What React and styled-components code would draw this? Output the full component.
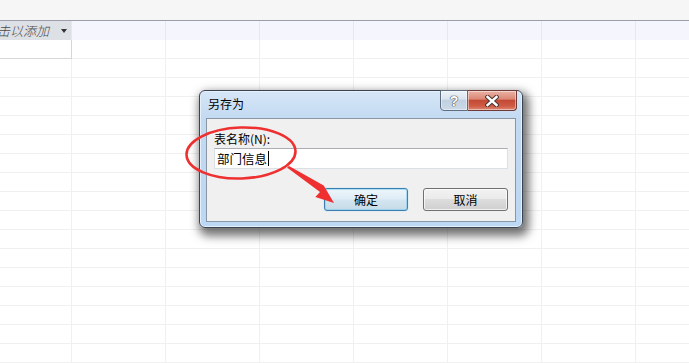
import React from 'react';
import styled, { createGlobalStyle } from 'styled-components';

const Global = createGlobalStyle`
  html, body { margin: 0; padding: 0; background: #fff; }
  body {
    width: 689px; height: 363px; overflow: hidden;
    font-family: "Noto Sans CJK SC", "Liberation Sans", sans-serif;
  }
  * { box-sizing: border-box; }
`;

const Page = styled.div`
  position: relative;
  width: 689px;
  height: 363px;
  overflow: hidden;
  background: #fff;
`;

const TopBand = styled.div`
  height: 21px;
  background: #f6f6f6;
  border-bottom: 1px solid #9a9ea8;
`;

const Sheet = styled.div`
  display: grid;
  grid-template-columns: 72px repeat(7, 94px);
  grid-auto-rows: 19px;
`;

const HeaderLead = styled.div`
  display: flex;
  align-items: center;
  justify-content: flex-end;
  overflow: hidden;
  background: #dde0e5;
  padding-right: 5px;
  gap: 12px;
`;

const HeaderText = styled.span`
  font-style: italic;
  font-size: 13px;
  font-weight: 300;
  color: #4a4a4a;
  white-space: nowrap;
  line-height: 19px;
`;

const DropArrow = styled.span`
  width: 0;
  height: 0;
  border-left: 3.5px solid transparent;
  border-right: 3.5px solid transparent;
  border-top: 4px solid #333;
  margin-top: 1px;
  flex: none;
`;

const HeaderCell = styled.div`
  background: #f5f6fd;
  border-left: 1px solid #e7e8ef;
  margin-left: -1px;
`;

const Cell = styled.div`
  border-right: 1px solid ${p => (p.$active ? '#d6d6d6' : '#f0f0f0')};
  border-bottom: 1px solid ${p => (p.$active ? '#d6d6d6' : '#f0f0f0')};
`;

/* ---- dialog window ---- */
const Window = styled.div`
  position: absolute;
  left: 199px;
  top: 90px;
  width: 324px;
  height: 138px;
  display: flex;
  flex-direction: column;
  border: 1px solid #3b4350;
  border-radius: 6px;
  background: linear-gradient(180deg, #d6e6f7 0%, #c3daf2 20%, #bfd8f2 60%, #bcd8f5 100%);
  box-shadow: 3px 5px 10px 3px rgba(0, 0, 0, 0.55), inset 0 0 0 1px #e6f0fb;
`;

const TitleBar = styled.div`
  height: 27px;
  display: flex;
  align-items: flex-start;
  justify-content: space-between;
`;

const Title = styled.div`
  font-size: 12px;
  line-height: 14px;
  color: #000;
  padding: 6px 0 0 8px;
`;

const CaptionGroup = styled.div`
  display: flex;
  margin: -1px 5px 0 0;
`;

const CaptionButton = styled.div`
  width: ${p => (p.$close ? 49 : 28)}px;
  height: 21px;
  display: flex;
  align-items: center;
  justify-content: center;
  border: 1px solid ${p => (p.$close ? '#6d3a35' : '#5e6d7d')};
  border-left-width: ${p => (p.$close ? 0 : 1)}px;
  border-radius: ${p => (p.$close ? '0 0 4px 0' : '0 0 0 4px')};
  background: ${p =>
    p.$close
      ? 'linear-gradient(180deg, #eab2a6 0%, #dc8774 42%, #c44a35 50%, #cf5c46 80%, #dd8a74 100%)'
      : 'linear-gradient(180deg, #eef3f9 0%, #dae4ef 42%, #c2d1e1 50%, #cbd9e8 100%)'};
  box-shadow: inset 0 0 0 1px rgba(255, 255, 255, 0.45);
`;

const HelpGlyph = styled.span`
  font-family: "Liberation Sans", sans-serif;
  font-weight: bold;
  font-size: 14px;
  line-height: 14px;
  color: #fff;
  text-shadow: 0 0 1px #444, 0 0 1px #444, 0 0 1px #444;
`;

const Panel = styled.div`
  flex: 1;
  margin: 0 6px 5px 6px;
  border: 1px solid #8a96a3;
  background: #f0f0f0;
  padding: 12px 7px 0 7px;
  display: flex;
  flex-direction: column;
`;

const Label = styled.div`
  font-size: 12px;
  line-height: 16px;
  color: #000;
`;

const Field = styled.div`
  margin-top: 1px;
  height: 21px;
  border: 1px solid #dbdfe6;
  border-top-color: #abadb3;
  background: #fff;
  display: flex;
  align-items: center;
  padding-left: 2px;
  font-size: 12.5px;
  color: #000;
`;

const Caret = styled.span`
  width: 1px;
  height: 15px;
  background: #000;
  margin-left: 1px;
`;

const ButtonRow = styled.div`
  margin-top: 19px;
  display: flex;
  justify-content: flex-end;
  gap: 15px;
`;

const PushButton = styled.div`
  width: ${p => (p.$default ? 84 : 85)}px;
  height: 23px;
  display: flex;
  align-items: center;
  justify-content: center;
  font-size: 12px;
  color: #000;
  border-radius: 3px;
  border: 1px solid ${p => (p.$default ? '#3c7fb1' : '#707070')};
  background: ${p =>
    p.$default
      ? 'linear-gradient(180deg, #ecf5fb 0%, #e0edf6 45%, #d2e4ef 55%, #c6dbe8 100%)'
      : 'linear-gradient(180deg, #f2f2f2 0%, #ebebeb 45%, #dddddd 50%, #cfcfcf 100%)'};
  box-shadow: ${p =>
    p.$default
      ? 'inset 0 0 0 1px rgba(120,200,240,0.55), 0 0 1px #7ec4ea'
      : 'inset 0 0 0 1px rgba(255,255,255,0.7)'};
`;

const Annotation = styled.svg`
  position: absolute;
  left: 0;
  top: 0;
  width: 689px;
  height: 363px;
  pointer-events: none;
`;

const HEAD_COLS = 8;
const BODY_ROWS = 17;

export default function App() {
  const rows = [];
  for (let r = 0; r < BODY_ROWS; r++) {
    for (let c = 0; c < HEAD_COLS; c++) {
      rows.push(<Cell key={`${r}-${c}`} $active={r === 0 && c === 0} />);
    }
  }
  return (
    <Page>
      <Global />
      <TopBand />
      <Sheet>
        <HeaderLead>
          <HeaderText>单击以添加</HeaderText>
          <DropArrow />
        </HeaderLead>
        {Array.from({ length: HEAD_COLS - 1 }).map((_, i) => (
          <HeaderCell key={i} />
        ))}
        {rows}
      </Sheet>

      <Window>
        <TitleBar>
          <Title>另存为</Title>
          <CaptionGroup>
            <CaptionButton>
              <HelpGlyph>?</HelpGlyph>
            </CaptionButton>
            <CaptionButton $close>
              <svg width="14" height="12" viewBox="0 0 14 12">
                <path d="M2.5 2 L11.5 10 M11.5 2 L2.5 10" stroke="#4a3532" strokeWidth="4.4" strokeLinecap="square" />
                <path d="M2.5 2 L11.5 10 M11.5 2 L2.5 10" stroke="#ffffff" strokeWidth="2.4" strokeLinecap="square" />
              </svg>
            </CaptionButton>
          </CaptionGroup>
        </TitleBar>
        <Panel>
          <Label>表名称(N):</Label>
          <Field>
            部门信息
            <Caret />
          </Field>
          <ButtonRow>
            <PushButton $default>确定</PushButton>
            <PushButton>取消</PushButton>
          </ButtonRow>
        </Panel>
      </Window>

      <Annotation viewBox="0 0 689 363">
        <ellipse cx="241" cy="153" rx="54.5" ry="25.5" fill="none" stroke="#ee3030" strokeWidth="2.6" transform="rotate(-2 241 153)" />
        <path d="M287 167.5 L289 166 L323.7 185.6 L334 203 L315.3 197 L320 192 Z" fill="#ee3030" />
      </Annotation>
    </Page>
  );
}
